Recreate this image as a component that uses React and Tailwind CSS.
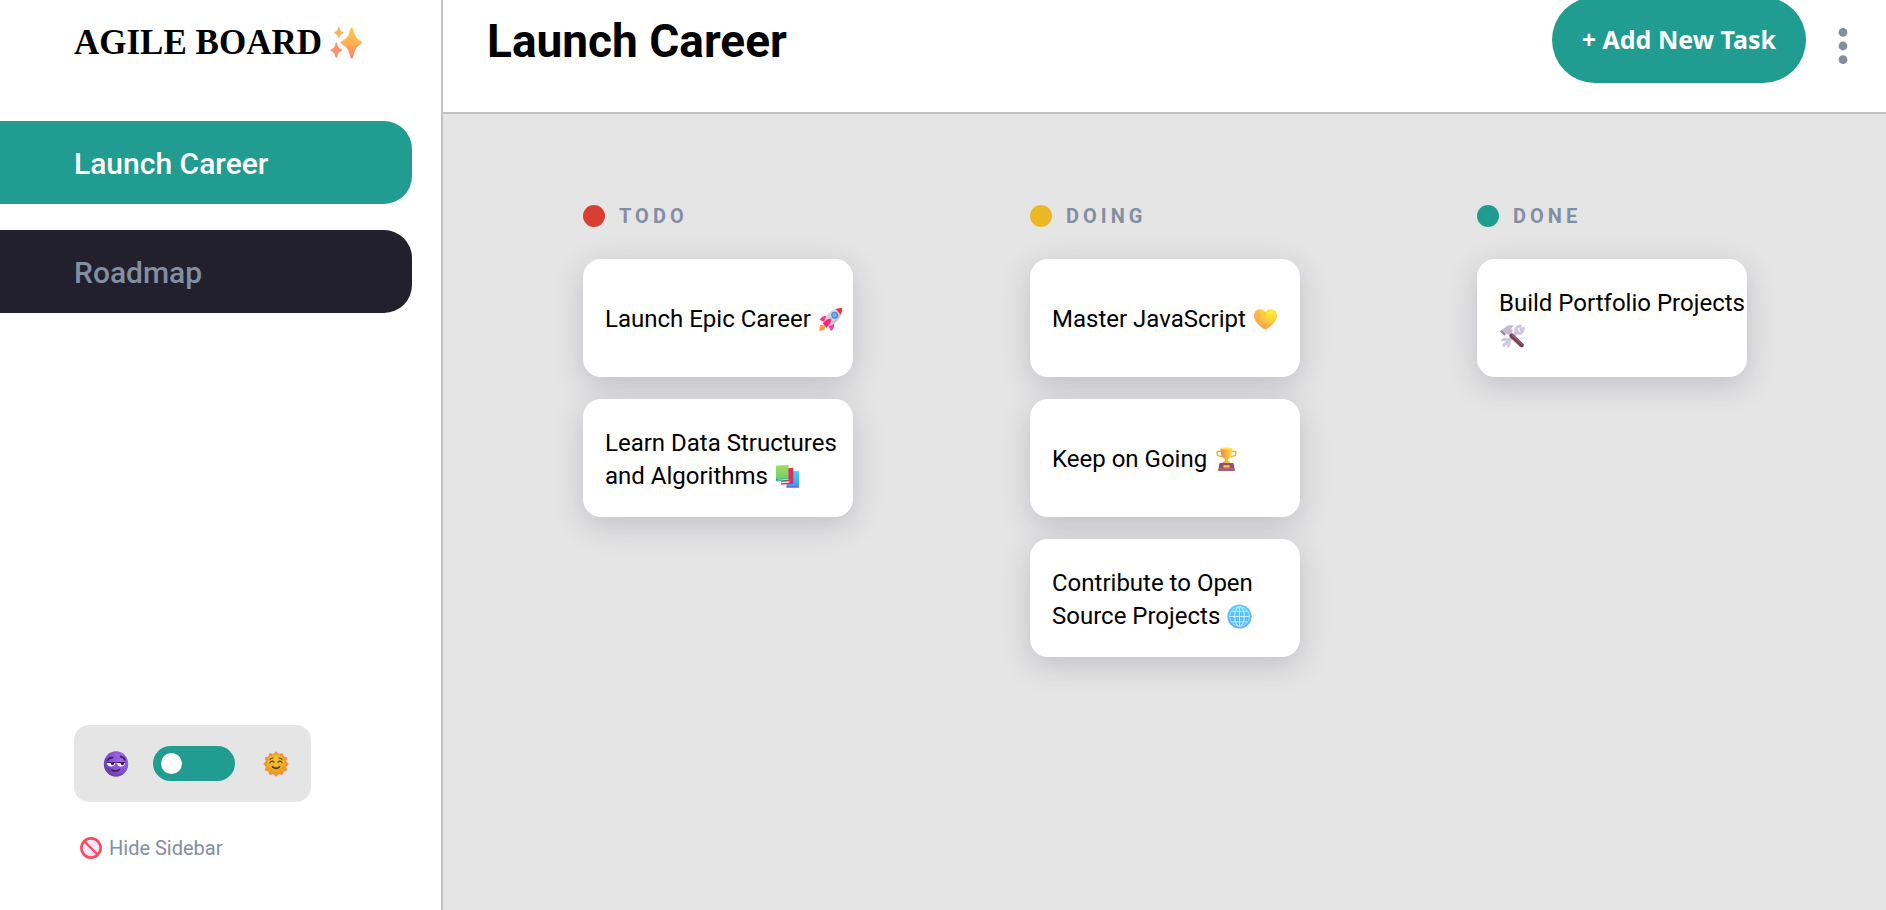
import { useState } from "react";

function Sparkles() {
  return (
    <svg className="h-8 w-8 shrink-0" viewBox="0 0 32 32" aria-hidden="true">
      <defs>
        <linearGradient id="spark" x1="0" y1="0" x2="0" y2="1">
          <stop offset="0" stopColor="#fdc94f" />
          <stop offset="0.5" stopColor="#ffb04f" />
          <stop offset="1" stopColor="#ff7f6b" />
        </linearGradient>
      </defs>
      <path fill="url(#spark)" d="M20.400 1.400Q21.600-.6 23 1.400C25 9 25.600 11 31 14.200Q33 15.600 31 17C25.600 20.400 25 23 23 30.400Q21.600 32.600 20.400 30.400C18.500 23 17.600 20.400 11.500 17Q9.600 15.600 11.500 14.200C17.600 11 18.500 9 20.400 1.400Z" />
      <path fill="#f0b65c" d="M8.200.6Q8.800-.4 9.400.6C10.100 3.400 10.600 4.200 13 5.200Q14 5.800 13 6.400C10.600 7.400 10.100 8.200 9.400 10.600Q8.800 11.600 8.200 10.600C7.500 8.200 7 7.400 4.600 6.400Q3.600 5.800 4.600 5.200C7 4.200 7.500 3.400 8.200.6Z" />
      <path fill="#ff9069" d="M5.600 16.200Q6.300 15 7 16.200C7.900 20 8.600 21 11.600 22.400Q12.800 23.200 11.600 24C8.600 25.400 7.900 26.400 7 30.200Q6.300 31.400 5.600 30.200C4.700 26.400 4 25.400 1 24Q-.2 23.200 1 22.400C4 21 4.700 20 5.600 16.200Z" />
    </svg>
  );
}

const iconClass = "ml-px inline-block h-[25px] w-[25px] align-[-5px]";

function Rocket() {
  return (
    <svg className={iconClass} viewBox="0 0 26 26" aria-hidden="true">
      <path fill="#ff9a3c" d="M2.500 18.500L7.500 19.500 6.500 24 1.500 25Q1 21.500 2.500 18.500Z" />
      <path fill="#ff3d7f" d="M9 9Q4 9 1.500 13.500L7 15.500ZM17 17Q17 22 13.500 25L10.500 19.500Z" />
      <path fill="#d9cfe0" d="M6 17C7 9 14 2 21 1.500L24.500 5C24 12 17.500 18.500 10 20.500Z" />
      <path fill="#b9aec6" d="M24.500 5C24 12 17.500 18.500 10 20.500L8.500 19Q18 15 22 3Z" opacity=".4" />
      <path fill="#f8312f" d="M18.500 2.200Q21.500.8 25.300.7Q25.500 4.500 23.600 8Z" />
      <path fill="#f9257d" d="M5 17Q10 11.500 14 12.500Q14 17 8.500 21.500Z" />
      <circle cx="17.400" cy="8.600" r="3.600" fill="#4689d8" />
      <circle cx="17.200" cy="8.400" r="2.300" fill="#69b8f5" />
    </svg>
  );
}

function Books() {
  return (
    <svg className={iconClass} viewBox="0 0 26 26" aria-hidden="true">
      <defs>
        <linearGradient id="bookGreen" x1="0" y1="0" x2="0" y2="1">
          <stop offset="0" stopColor="#a4df52" />
          <stop offset="1" stopColor="#62cc83" />
        </linearGradient>
        <linearGradient id="bookBlue" x1="0" y1="0" x2="0" y2="1">
          <stop offset="0" stopColor="#46d3f3" />
          <stop offset="1" stopColor="#3b9bed" />
        </linearGradient>
      </defs>
      <path fill="url(#bookBlue)" d="M14 8L25 7V24.500L12 24.500V21Z" />
      <path fill="#6a65d2" d="M12 23L25 23V24.500H12Z" />
      <path fill="#dd2d62" d="M8 5L19 4V20.500L6.500 21.500V17Z" />
      <path fill="#eadbe9" d="M6.500 18.500L15 18V19.500L7 20Z" />
      <path fill="url(#bookGreen)" d="M1 2.500Q1 1.500 2 1.500L14 1V15.500L2.500 17.500Q1 17.500 1 16Z" />
      <path fill="#2f9a72" d="M1 15.500L14 15V17L2.500 18.200Q1 18 1 15.500Z" />
      <path fill="#d9f3df" d="M2.300 16.400L14 15.700V16.400L2.600 17.200Z" />
    </svg>
  );
}

function Heart() {
  return (
    <svg className={iconClass} viewBox="0 0 26 26" aria-hidden="true">
      <defs>
        <radialGradient id="heart" cx=".75" cy=".15" r="1">
          <stop offset="0" stopColor="#fff02e" />
          <stop offset="0.45" stopColor="#ffc840" />
          <stop offset="1" stopColor="#ff9052" />
        </radialGradient>
      </defs>
      <path fill="url(#heart)" d="M13 5.200C15 2.500 18 2 20.500 2.600C24.500 3.800 25.800 8 24.400 12C22.500 17 18 20.500 14.300 23Q13 23.800 11.700 23C8 20.500 3.500 17 1.600 12C.2 8 1.500 3.800 5.500 2.600C8 2 11 2.500 13 5.200Z" />
      <path fill="none" stroke="#ffa23c" strokeWidth="1" opacity=".6" d="M13 5.200Q12.800 7.500 11.500 9" />
    </svg>
  );
}

function Trophy() {
  return (
    <svg className={iconClass} viewBox="0 0 26 26" aria-hidden="true">
      <defs>
        <linearGradient id="cup" x1="0" y1="0" x2="1" y2="0">
          <stop offset="0" stopColor="#e98a3d" />
          <stop offset="0.6" stopColor="#fcb83d" />
          <stop offset="1" stopColor="#ffe54f" />
        </linearGradient>
      </defs>
      <path fill="none" stroke="#f4ac42" strokeWidth="1.500" d="M8 4.500H4.500C2.500 4.500 2.600 8.500 5 9.200L8.500 10.200M18 4.500H21.500C23.500 4.500 23.400 8.500 21 9.200L17.500 10.200" />
      <path fill="url(#cup)" d="M7 1H19C19.500 7 18 11.500 14.500 12.500V14L18.500 17.500H7.500L11.500 14V12.500C8 11.500 6.500 7 7 1Z" />
      <ellipse cx="13" cy="1.500" rx="6" ry="1.100" fill="#ffdf55" />
      <path fill="#92506b" d="M5.500 17.500Q5.700 16.700 6.700 16.700H19.300Q20.300 16.700 20.500 17.500L21.300 22.500H4.700Z" />
      <rect x="4.200" y="22.300" width="17.600" height="2.700" rx=".8" fill="#a85e6e" />
      <rect x="9.700" y="19" width="6.600" height="2.400" rx=".8" fill="#ffcc4a" />
    </svg>
  );
}

function Globe() {
  return (
    <svg className={iconClass} viewBox="0 0 26 26" aria-hidden="true">
      <defs>
        <linearGradient id="globe" x1="0" y1="0" x2="0" y2="1">
          <stop offset="0" stopColor="#54ccff" />
          <stop offset="1" stopColor="#58b2fb" />
        </linearGradient>
      </defs>
      <circle cx="13" cy="13" r="12.600" fill="url(#globe)" />
      <g fill="none" stroke="#c8f0ff" strokeWidth="1.100">
        <ellipse cx="13" cy="13" rx="5" ry="10.200" />
        <path d="M13 2.500V23.500M2.500 13H23.500M4.500 7.500H21.500M4.500 18.500H21.500" />
      </g>
      <circle cx="13" cy="13" r="10.200" fill="none" stroke="#b5e6ff" strokeWidth=".8" />
    </svg>
  );
}

function Tools() {
  return (
    <svg className={iconClass} viewBox="0 0 26 26" aria-hidden="true">
      <path stroke="#cdc3dc" strokeWidth="4" strokeLinecap="round" d="M7.500 19L18 8" />
      <path fill="none" stroke="#d0c7df" strokeWidth="3.200" d="M22.500 2.500C18 1.500 15.500 5 17 8.500C20 11 24 9 24 5L20.500 6.500M2.500 18C2.500 15.500 6 15 8 17C10 19 10 22.500 7.500 23.200M3 23L6 20" />
      <path stroke="#76405a" strokeWidth="4.600" strokeLinecap="round" d="M12 12L22.500 22" />
      <path stroke="#a15c6f" strokeWidth="1.500" strokeLinecap="round" d="M13 11.500L22.500 20.500" />
      <path fill="#c4b9d3" d="M0 7.500L8 1.500Q12 .2 14 2L11.500 4.500 13.500 8 9 11.500 6.500 10 4.500 12.200Z" />
      <path fill="#988ba9" d="M0 7.500L4.500 12.200 6 10.500 2 6.500Z" />
    </svg>
  );
}

function MoonFace() {
  return (
    <svg className="h-[26px] w-[26px]" viewBox="0 0 26 26" aria-hidden="true">
      <defs>
        <radialGradient id="moon" cx=".7" cy=".3" r=".8">
          <stop offset="0" stopColor="#a663e6" />
          <stop offset="0.6" stopColor="#8552ce" />
          <stop offset="1" stopColor="#633ca4" />
        </radialGradient>
      </defs>
      <ellipse cx="13" cy="13" rx="12.200" ry="12.800" fill="url(#moon)" />
      <circle cx="13.500" cy="4" r="2.400" fill="#9a5ee6" />
      <circle cx="6" cy="18.500" r="2" fill="#6b3eae" />
      <path fill="none" stroke="#38205e" strokeWidth="1.600" strokeLinecap="round" d="M4.500 9.500Q6 6.500 9.500 6.500M17.500 5.500Q21 6 22 9M9 19Q13 21.500 16.500 18.500" />
      <path fill="#fff" d="M4 11.800H12Q12 15.600 8 15.600Q4.300 15.600 4 11.800ZM14 11.800H22Q21.800 15.600 18 15.600Q14.200 15.600 14 11.800Z" />
      <path fill="#301c4d" d="M7.500 11.800H11.200Q11 14.300 9.400 14.300Q7.600 14 7.500 11.800ZM17.500 11.800H21.200Q21 14.300 19.400 14.300Q17.600 14 17.500 11.800Z" />
      <path stroke="#402367" strokeWidth="1" d="M3.500 11.500H12.200M13.800 11.500H22.500" />
    </svg>
  );
}

function SunFace() {
  return (
    <svg className="h-[26px] w-[26px]" viewBox="0 0 26 26" aria-hidden="true">
      <defs>
        <radialGradient id="sun" cx=".5" cy=".3" r=".8">
          <stop offset="0" stopColor="#fbc52f" />
          <stop offset="1" stopColor="#dc9a1c" />
        </radialGradient>
      </defs>
      <path fill="#f98a38" d="M13 .3L15.800 3 19.500 1.900 20.600 5.500 24.300 6.500 23.200 10.200 25.700 13 23.200 15.800 24.300 19.500 20.600 20.500 19.500 24.100 15.800 23 13 25.700 10.200 23 6.500 24.100 5.400 20.500 1.700 19.500 2.800 15.800.3 13 2.800 10.200 1.700 6.500 5.400 5.500 6.500 1.900 10.200 3Z" />
      <circle cx="13" cy="13" r="9.900" fill="url(#sun)" />
      <path fill="none" stroke="#583719" strokeWidth="1.200" strokeLinecap="round" d="M7 11.500Q9 9 11 11.200M15 11.200Q17 9 19 11.500M7 8.500Q8 7 10 7M16 7Q18 7 19 8.500" />
      <path fill="none" stroke="#4d2b17" strokeWidth="1.600" strokeLinecap="round" d="M9.500 15.800Q13 18.600 16.500 15.800" />
    </svg>
  );
}

function Prohibited() {
  return (
    <svg className="h-[22px] w-[22px]" viewBox="0 0 22 22" aria-hidden="true">
      <circle cx="11" cy="11" r="9.600" fill="#f6eafa" stroke="#fa4b62" strokeWidth="2.600" />
      <path stroke="#fa4b62" strokeWidth="2.400" d="M4.500 4.500L17.500 17.500" />
    </svg>
  );
}

const boards = ["Launch Career", "Roadmap"];

const columns = [
  {
    name: "TODO",
    dot: "bg-[#d83f31]",
    tasks: [
      { title: "Launch Epic Career", Icon: Rocket },
      { title: "Learn Data Structures and Algorithms", Icon: Books },
    ],
  },
  {
    name: "DOING",
    dot: "bg-[#e9b824]",
    tasks: [
      { title: "Master JavaScript", Icon: Heart },
      { title: "Keep on Going", Icon: Trophy },
      { title: "Contribute to Open Source Projects", Icon: Globe },
    ],
  },
  {
    name: "DONE",
    dot: "bg-[#219c90]",
    tasks: [{ title: "Build Portfolio Projects", Icon: Tools }],
  },
];

function Sidebar({ active, onSelect }) {
  return (
    <aside className="flex w-[443px] shrink-0 flex-col border-r-2 border-[#bfc1c2] bg-white pt-[21px]">
      <div className="flex h-11 items-center gap-2 pl-[74px]">
        <span className="font-['Liberation_Serif',serif] text-[35px] leading-11 font-bold">AGILE BOARD</span>
        <Sparkles />
      </div>
      <nav className="mt-14 flex flex-col gap-[26px] pr-[29px]" aria-label="Boards">
        {boards.map((name) => (
          <button
            key={name}
            type="button"
            onClick={() => onSelect(name)}
            className={
              "h-[83px] rounded-r-[28px] pt-0.5 pl-[74px] text-left text-[30px] font-medium " +
              (name === active ? "bg-[#219c90] text-white" : "bg-[#22202d] text-[#828fa3]")
            }
          >
            {name}
          </button>
        ))}
      </nav>
      <div className="mt-auto flex flex-col items-start gap-[30px] pb-[46px] pl-[74px]">
        <div className="flex h-[77px] w-[237px] items-center rounded-[15px] bg-[#e5e5e5] pl-[29px]">
          <MoonFace />
          <input
            type="checkbox"
            aria-label="Light theme"
            className="mr-7 ml-6 h-[35px] w-[82px] appearance-none rounded-full bg-[#219c90] px-2 py-[7px] before:block before:h-[21px] before:w-[21px] before:rounded-full before:bg-white checked:before:ml-auto"
          />
          <SunFace />
        </div>
        <button type="button" className="flex h-8 items-center gap-[7px] pl-1.5 text-[20px] text-[#828fa3]">
          <Prohibited />
          Hide Sidebar
        </button>
      </div>
    </aside>
  );
}

function Header({ title }) {
  return (
    <header className="flex h-[114px] items-center justify-between border-b-2 border-[#c2c2c2] bg-white pr-9 pb-8 pl-11">
      <h1 className="pt-0.5 text-[46px] leading-none font-bold">{title}</h1>
      <div className="flex items-center gap-[30px]">
        <button
          type="button"
          className="h-[86px] rounded-full bg-[#219c90] px-[30px] font-['Noto_Sans',sans-serif] text-[25px] font-bold text-white"
        >
          + Add New Task
        </button>
        <button type="button" aria-label="Board options" className="pt-3">
          <svg className="h-10 w-[14px]" viewBox="0 0 14 40" fill="#828fa3" aria-hidden="true">
            <circle cx="7" cy="6.300" r="4.400" />
            <circle cx="7" cy="20" r="4.400" />
            <circle cx="7" cy="33.700" r="4.400" />
          </svg>
        </button>
      </div>
    </header>
  );
}

function Column({ name, dot, tasks }) {
  return (
    <section className="w-[270px]">
      <h2 className="flex h-[22px] items-center gap-[14px] text-[20px] font-bold tracking-[4px] text-[#828fa3]">
        <span className={"h-[22px] w-[22px] rounded-full " + dot} />
        {name}
      </h2>
      <ul className="mt-8 flex flex-col gap-[22px]">
        {tasks.map(({ title, Icon }) => (
          <li
            key={title}
            className="flex h-[118px] items-center rounded-[18px] bg-white pt-[3px] pl-[22px] text-[24px] leading-[33px] shadow-[0_8px_30px_0_rgba(80,75,105,0.24)]"
          >
            <p>
              {title} <Icon />
            </p>
          </li>
        ))}
      </ul>
    </section>
  );
}

export default function App() {
  const [active, setActive] = useState("Launch Career");
  return (
    <div className="flex min-h-screen bg-[#e5e5e5] font-[Roboto,sans-serif] text-black">
      <Sidebar active={active} onSelect={setActive} />
      <div className="flex min-w-0 grow flex-col">
        <Header title={active} />
        <main className="flex grow justify-between pt-[91px] pr-[139px] pl-[140px]">
          {columns.map((column) => (
            <Column key={column.name} {...column} />
          ))}
        </main>
      </div>
    </div>
  );
}
